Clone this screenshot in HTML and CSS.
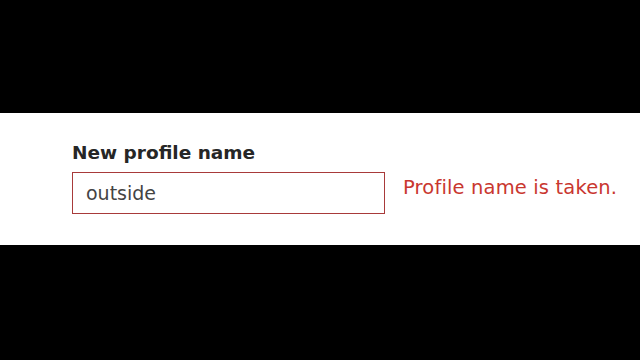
FILE: index.html
```html
<!DOCTYPE html>
<html lang="en">
<head>
    <meta charset="UTF-8">
    <meta name="viewport" content="width=device-width, initial-scale=1.0">
    <title>New profile name</title>
    <link rel="stylesheet" href="styles.css">
</head>
<body>
    <div class="panel">
        <form class="profile-form">
            <label for="profileName">New profile name</label>
            <div class="field-row">
                <input type="text" id="profileName" name="profileName" value="outside" class="invalid">
                <span class="error-msg">Profile name is taken.</span>
            </div>
        </form>
    </div>
</body>
</html>
```

FILE: styles.css
```css
body {
    margin: 0;
    background: #000;
    font-family: "DejaVu Sans", "Liberation Sans", Arial, sans-serif;
}
.panel {
    margin-top: 113px;
    height: 132px;
    box-sizing: border-box;
    background: #fff;
    padding: 29px 0 0 72px;
}
label {
    display: block;
    font-size: 18.5px;
    line-height: 22px;
    font-weight: bold;
    color: #262626;
    margin-bottom: 8px;
}
.field-row {
    display: flex;
    align-items: flex-start;
    gap: 18px;
}
input {
    width: 313px;
    height: 42px;
    box-sizing: border-box;
    padding: 0 13px;
    border: 1px solid #a83a3a;
    border-radius: 0;
    font-family: inherit;
    font-size: 19px;
    color: #444;
    outline: none;
}
.error-msg {
    margin-top: 5px;
    font-size: 19.5px;
    line-height: 22px;
    letter-spacing: 0.15px;
    color: #c9372f;
}
```
